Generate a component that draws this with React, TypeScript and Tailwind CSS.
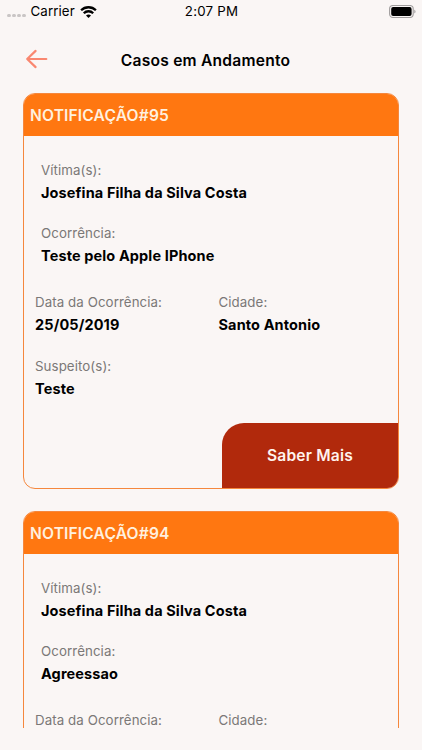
type Caso = {
  id: number;
  vitimas: string;
  ocorrencia: string;
  data: string;
  cidade: string;
  suspeitos: string;
};

const casos: Caso[] = [
  {
    id: 95,
    vitimas: 'Josefina Filha da Silva Costa',
    ocorrencia: 'Teste pelo Apple IPhone',
    data: '25/05/2019',
    cidade: 'Santo Antonio',
    suspeitos: 'Teste',
  },
  {
    id: 94,
    vitimas: 'Josefina Filha da Silva Costa',
    ocorrencia: 'Agreessao',
    data: '25/05/2019',
    cidade: 'Santo Antonio',
    suspeitos: 'Teste',
  },
];

const StatusBar = () => (
  <div className="grid h-6 shrink-0 grid-cols-3 items-center pl-[7px] pr-[6px] text-[13.3px] tracking-[0.2px] text-black">
    <div className="flex items-center">
      <div className="mr-[5px] mt-[7px] flex gap-[1.4px]">
        {[0, 1, 2, 3].map(dot => (
          <span key={dot} className="size-[3.6px] rounded-full bg-[#c9c5c5]" />
        ))}
      </div>
      <span className="tracking-[0.1px]">Carrier</span>
      <svg className="ml-[5px] h-[13px] w-[17px]" viewBox="0 0 17 13" fill="none" stroke="#000" strokeWidth="2.3">
        <path d="M1.1 4.3a10.5 10.5 0 0 1 14.8 0" />
        <path d="M3.8 7.2a6.7 6.7 0 0 1 9.4 0" />
        <path d="M8.5 12.1 6 9.6a3.6 3.6 0 0 1 5 0z" fill="#000" stroke="none" />
      </svg>
    </div>
    <span className="text-center">2:07 PM</span>
    <svg className="h-[14px] w-[27px] justify-self-end" viewBox="0 0 27 14" fill="none">
      <rect x="0.6" y="0.5" width="23.6" height="12" rx="3.4" stroke="#a09d9d" strokeWidth="1.1" />
      <rect x="2.2" y="2" width="20.4" height="9" rx="1.9" fill="#000" />
      <path d="M25.3 4.7v3.8c.8-.3 1.2-1 1.2-1.9s-.4-1.6-1.2-1.9z" fill="#a09d9d" />
    </svg>
  </div>
);

const Field = ({ label, value }: { label: string; value: string }) => (
  <div className="whitespace-nowrap">
    <p className="text-[13.3px] leading-[24px] tracking-[0.08px] text-[#7b7877]">{label}</p>
    <p className="text-[14.5px] font-bold leading-[22px] tracking-[0.12px] text-black">{value}</p>
  </div>
);

const CasoCard = ({ caso }: { caso: Caso }) => (
  <article className="flex h-[396px] shrink-0 flex-col overflow-hidden rounded-[12px] border border-[#f5873d]">
    <h2 className="flex h-[42px] shrink-0 items-center bg-[#ff7711] pl-[6px] pt-[2px] text-[15.6px] font-semibold tracking-[0.15px] text-[#fff0df]">
      NOTIFICAÇÃO#{caso.id}
    </h2>
    <div className="flex flex-1 flex-col pl-[11px] pt-[22px]">
      <div className="flex flex-col gap-[17px] pl-[6px]">
        <Field label="Vítima(s):" value={caso.vitimas} />
        <Field label="Ocorrência:" value={caso.ocorrencia} />
      </div>
      <div className="mt-[23px] grid grid-cols-[183.5px_1fr] gap-y-[18px]">
        <Field label="Data da Ocorrência:" value={caso.data} />
        <Field label="Cidade:" value={caso.cidade} />
        <Field label="Suspeito(s):" value={caso.suspeitos} />
      </div>
      <button className="mt-auto h-[65px] w-[176px] self-end rounded-tl-[22px] bg-[#b1290c] pt-[1px] text-[15.6px] font-semibold tracking-[0.2px] text-[#fff3ee]">
        Saber Mais
      </button>
    </div>
  </article>
);

const App = () => (
  <div className="flex h-[750px] w-[422px] flex-col overflow-hidden bg-[#faf6f5] font-['Inter',sans-serif]">
    <StatusBar />
    <header className="grid h-[69px] shrink-0 grid-cols-[60px_1fr_60px] items-center pl-[25px] pr-[36px] pt-[4px]">
      <button aria-label="Voltar" className="-mt-[3px]">
        <svg className="h-[20px] w-[23px]" viewBox="0 0 23 20" fill="none" stroke="#f98770" strokeWidth="2.2" strokeLinecap="round" strokeLinejoin="round">
          <path d="M21.3 10H2.2M10.6 1.9 2.2 10l8.4 8.1" />
        </svg>
      </button>
      <h1 className="whitespace-nowrap text-center text-[15.6px] font-semibold tracking-[0.22px] text-black">Casos em Andamento</h1>
    </header>
    <main className="mb-[22px] flex min-h-0 flex-1 flex-col gap-[22px] overflow-hidden px-[23px]">
      {casos.map(caso => (
        <CasoCard key={caso.id} caso={caso} />
      ))}
    </main>
  </div>
);

export default App;
